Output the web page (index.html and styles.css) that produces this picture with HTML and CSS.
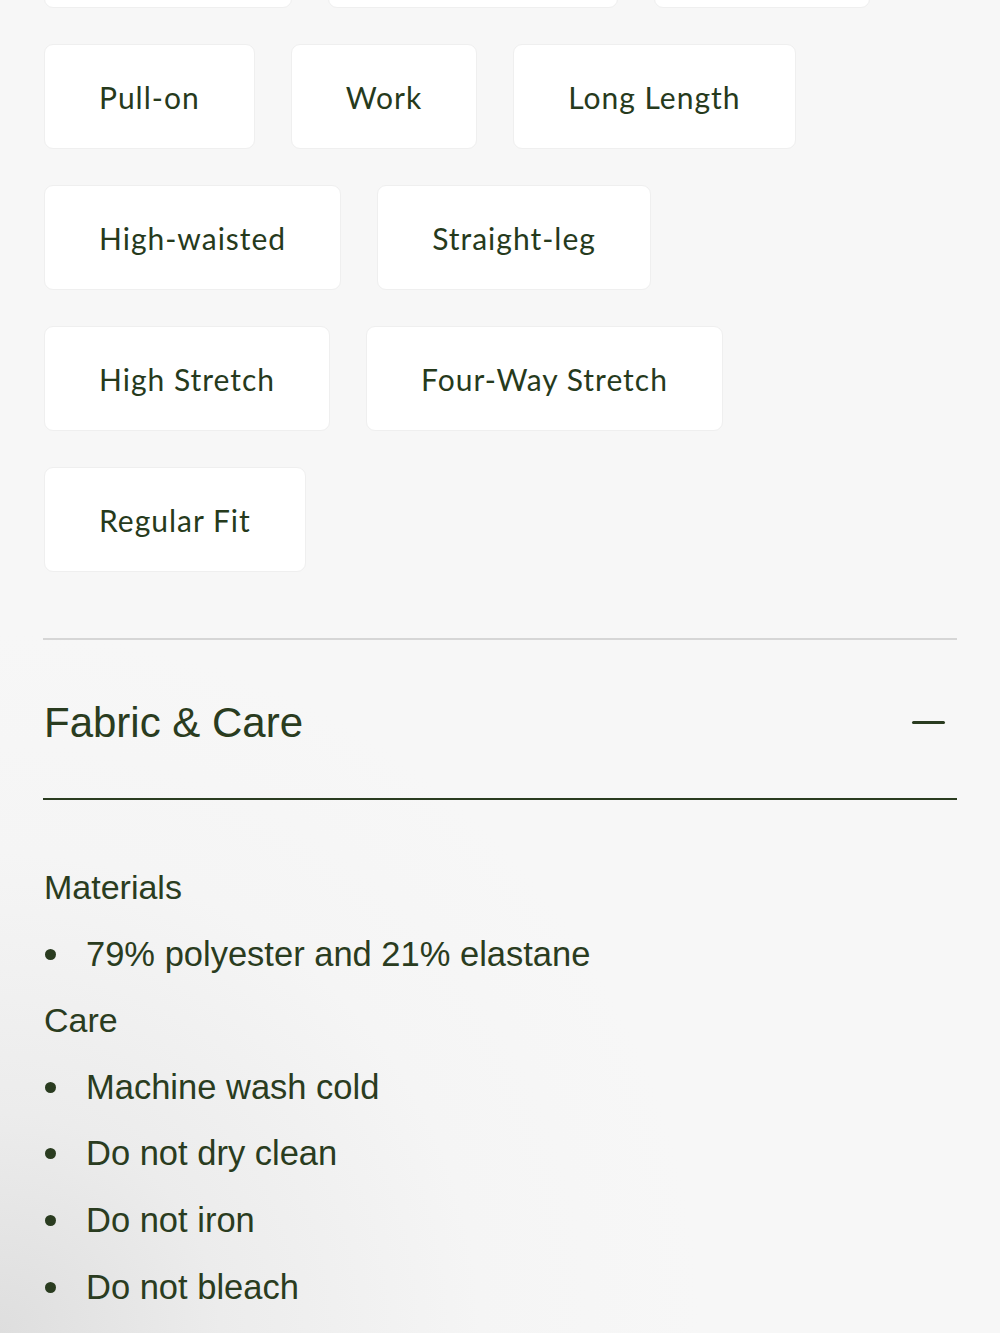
FILE: index.html
```html
<!DOCTYPE html>
<html lang="en">
<head>
    <meta charset="UTF-8">
    <meta name="viewport" content="width=device-width, initial-scale=1.0">
    <title>Product details</title>
    <link rel="stylesheet" href="styles.css">
</head>
<body>

<div class="container">
    <!-- feature tags -->
    <div class="tags">
        <div class="tag-row row-top">
            <div class="tag tag-a"></div>
            <div class="tag tag-b"></div>
            <div class="tag tag-c"></div>
        </div>
        <div class="tag-row">
            <div class="tag">Pull-on</div>
            <div class="tag">Work</div>
            <div class="tag">Long Length</div>
        </div>
        <div class="tag-row">
            <div class="tag">High-waisted</div>
            <div class="tag">Straight-leg</div>
        </div>
        <div class="tag-row">
            <div class="tag">High Stretch</div>
            <div class="tag">Four-Way Stretch</div>
        </div>
        <div class="tag-row">
            <div class="tag">Regular Fit</div>
        </div>
    </div>

    <div class="divider"></div>

    <!-- Fabric & Care (open) -->
    <div class="accordion-head">
        <h2>Fabric &amp; Care</h2>
        <span class="minus"></span>
    </div>
    <div class="accordion-body">
        <p class="group">Materials</p>
        <ul>
            <li>79% polyester and 21% elastane</li>
        </ul>
        <p class="group">Care</p>
        <ul>
            <li>Machine wash cold</li>
            <li>Do not dry clean</li>
            <li>Do not iron</li>
            <li>Do not bleach</li>
        </ul>
    </div>
</div>

</body>
</html>
```

FILE: styles.css
```css
html, body {
    margin: 0;
    height: 100%;
}
body {
    font-family: "Liberation Sans", Arial, sans-serif;
    color: #2a3c20;
    background: #f7f7f7;
    background-image: radial-gradient(circle at 0% 100%, #dedede 0, #ececec 220px, #f5f5f5 480px, #f7f7f7 700px);
    overflow: hidden;
}
.container {
    padding: 0 43px;
}
.tags {
    display: flex;
    flex-direction: column;
    gap: 36px;
    margin-top: -97px;
    padding-left: 1px;
}
.tag-row {
    display: flex;
    gap: 36px;
}
.tag {
    height: 105px;
    padding: 0 54px;
    display: flex;
    align-items: center;
    box-sizing: border-box;
    background-color: #fff;
    border: 1px solid #efefef;
    border-radius: 9px;
    font-family: Lato, "Noto Sans", sans-serif;
    font-size: 30px;
    letter-spacing: 1px;
    color: #263a1c;
}
/* previous row, scrolled mostly out of view */
.tag-a { width: 248px; }
.tag-b { width: 290px; }
.tag-c { width: 216px; }
.divider {
    margin-top: 66px;
    border-top: 2px solid #d6d6d6;
}
.accordion-head {
    height: 158px;
    display: flex;
    align-items: center;
    justify-content: space-between;
    border-bottom: 2px solid #2a3c20;
}
.accordion-head h2 {
    margin: 0;
    padding: 7px 0 0 1px;
    font-size: 42px;
    font-weight: normal;
}
.minus {
    width: 33px;
    height: 3px;
    margin: 6px 12px 0 0;
    border-radius: 2px;
    background-color: #2a3c20;
}
.accordion-body {
    padding-top: 54px;
    line-height: 66.6px;
}
.group {
    margin: 0;
    padding-left: 1px;
    font-size: 34px;
}
ul {
    margin: 0;
    padding: 0;
    list-style: none;
}
li {
    position: relative;
    padding-left: 43px;
    font-size: 34.5px;
}
li::before {
    content: "";
    position: absolute;
    left: 2px;
    top: 28px;
    width: 11px;
    height: 11px;
    border-radius: 50%;
    background-color: #2a3c20;
}
```
